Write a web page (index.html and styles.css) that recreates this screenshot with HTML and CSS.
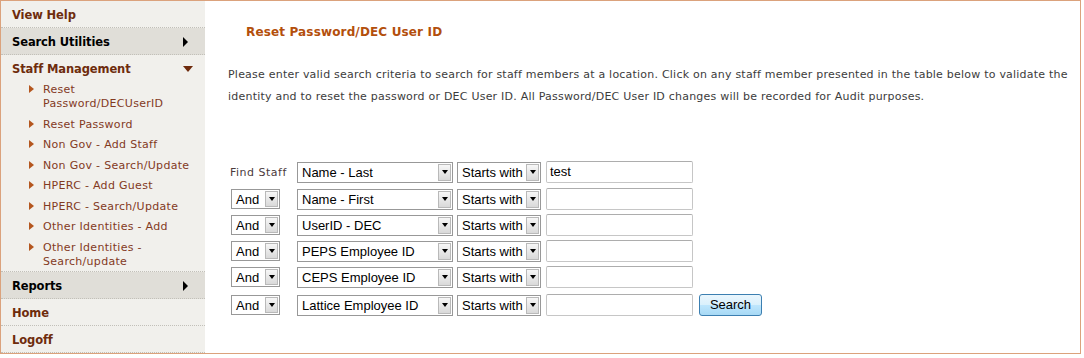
FILE: index.html
```html
<!DOCTYPE html>
<html>
<head>
<meta charset="utf-8">
<link rel="stylesheet" href="styles.css">
</head>
<body>
<div class="frame">
  <nav class="sidebar">
    <div class="hd brown sep">View Help</div>
    <div class="hd dark sep">Search Utilities<span class="ar"><svg width="5" height="10" viewBox="0 0 5 10"><polygon points="0,0 5,5 0,10" fill="#000"/></svg></span></div>
    <div class="hd brown staff">Staff Management<span class="ar"><svg width="10" height="6" viewBox="0 0 10 6"><polygon points="0,0 10,0 5,6" fill="#6e2a0c"/></svg></span></div>
    <ul class="sub sep">
      <li><svg class="bul" width="5" height="8" viewBox="0 0 5 8"><polygon points="0,0 5,4 0,8" fill="#b4561e"/></svg><span>Reset<br>Password/DECUserID</span></li>
      <li><svg class="bul" width="5" height="8" viewBox="0 0 5 8"><polygon points="0,0 5,4 0,8" fill="#b4561e"/></svg><span>Reset Password</span></li>
      <li><svg class="bul" width="5" height="8" viewBox="0 0 5 8"><polygon points="0,0 5,4 0,8" fill="#b4561e"/></svg><span>Non Gov - Add Staff</span></li>
      <li><svg class="bul" width="5" height="8" viewBox="0 0 5 8"><polygon points="0,0 5,4 0,8" fill="#b4561e"/></svg><span>Non Gov - Search/Update</span></li>
      <li><svg class="bul" width="5" height="8" viewBox="0 0 5 8"><polygon points="0,0 5,4 0,8" fill="#b4561e"/></svg><span>HPERC - Add Guest</span></li>
      <li><svg class="bul" width="5" height="8" viewBox="0 0 5 8"><polygon points="0,0 5,4 0,8" fill="#b4561e"/></svg><span>HPERC - Search/Update</span></li>
      <li><svg class="bul" width="5" height="8" viewBox="0 0 5 8"><polygon points="0,0 5,4 0,8" fill="#b4561e"/></svg><span>Other Identities - Add</span></li>
      <li><svg class="bul" width="5" height="8" viewBox="0 0 5 8"><polygon points="0,0 5,4 0,8" fill="#b4561e"/></svg><span>Other Identities -<br>Search/update</span></li>
    </ul>
    <div class="hd dark sep">Reports<span class="ar"><svg width="5" height="10" viewBox="0 0 5 10"><polygon points="0,0 5,5 0,10" fill="#000"/></svg></span></div>
    <div class="hd brown sep">Home</div>
    <div class="hd brown sep">Logoff</div>
  </nav>
  <main class="main">
    <h1 class="title">Reset Password/DEC User ID</h1>
    <p class="intro">Please enter valid search criteria to search for staff members at a location. Click on any staff member presented in the table below to validate the identity and to reset the password or DEC User ID. All Password/DEC User ID changes will be recorded for Audit purposes.</p>
    <div class="form">
      <div class="row first">
        <span class="lbl">Find Staff</span>
        <span class="sel field"><span class="val">Name - Last</span><span class="btn"><i></i></span></span>
        <span class="sel op"><span class="val">Starts with</span><span class="btn"><i></i></span></span>
        <span class="inp">test</span>
        <span></span>
      </div>
      <div class="row">
        <span class="sel and"><span class="val">And</span><span class="btn"><i></i></span></span>
        <span class="sel field"><span class="val">Name - First</span><span class="btn"><i></i></span></span>
        <span class="sel op"><span class="val">Starts with</span><span class="btn"><i></i></span></span>
        <span class="inp"></span>
        <span></span>
      </div>
      <div class="row">
        <span class="sel and"><span class="val">And</span><span class="btn"><i></i></span></span>
        <span class="sel field"><span class="val">UserID - DEC</span><span class="btn"><i></i></span></span>
        <span class="sel op"><span class="val">Starts with</span><span class="btn"><i></i></span></span>
        <span class="inp"></span>
        <span></span>
      </div>
      <div class="row">
        <span class="sel and"><span class="val">And</span><span class="btn"><i></i></span></span>
        <span class="sel field"><span class="val">PEPS Employee ID</span><span class="btn"><i></i></span></span>
        <span class="sel op"><span class="val">Starts with</span><span class="btn"><i></i></span></span>
        <span class="inp"></span>
        <span></span>
      </div>
      <div class="row">
        <span class="sel and"><span class="val">And</span><span class="btn"><i></i></span></span>
        <span class="sel field"><span class="val">CEPS Employee ID</span><span class="btn"><i></i></span></span>
        <span class="sel op"><span class="val">Starts with</span><span class="btn"><i></i></span></span>
        <span class="inp"></span>
        <span></span>
      </div>
      <div class="row last">
        <span class="sel and"><span class="val">And</span><span class="btn"><i></i></span></span>
        <span class="sel field"><span class="val">Lattice Employee ID</span><span class="btn"><i></i></span></span>
        <span class="sel op"><span class="val">Starts with</span><span class="btn"><i></i></span></span>
        <span class="inp"></span>
        <span class="search">Search</span>
      </div>
    </div>
  </main>
</div>
</body>
</html>
```
FILE: styles.css
```css
html, body { margin: 0; padding: 0; background: #fff; }
body { font-family: "DejaVu Sans", Verdana, sans-serif; font-size: 11px; }

.frame {
  display: flex;
  width: 1081px;
  height: 354px;
  border: 1px solid #dba27c;
  box-sizing: border-box;
}

.sidebar {
  width: 204px;
  flex: none;
  background: #f1f0ec;
}

.hd {
  height: 24px;
  padding: 2px 11px 0 11px;
  font-weight: bold;
  font-size: 11.5px;
  letter-spacing: -0.1px;
  display: flex;
  justify-content: space-between;
  align-items: center;
  box-sizing: content-box;
}
.hd.brown { color: #6e2c0c; }
.hd.dark { color: #000; background: #e0ded8; }
.hd.staff { height: 21px; padding-top: 3px; }
.sep { border-bottom: 1px dotted #c2c0b9; }

.ar { width: 11px; display: flex; align-items: center; }
.ar svg { display: block; }

.sub { list-style: none; margin: 0; padding: 1px 0 0 0; }
.sub li {
  display: flex;
  align-items: flex-start;
  padding: 3px 0 3.5px 28px;
  line-height: 14px;
  letter-spacing: 0.3px;
  color: #833a1e;
}
.sub li:last-child { padding-bottom: 2.5px; }
.sub .bul { flex: none; margin: 2px 9px 0 0; display: block; }

.main {
  flex: 1;
  background: #fff;
  padding: 23px 0 0 23px;
}

.title {
  margin: 0 0 24px 18px;
  font-size: 12px;
  line-height: 16px;
  font-weight: bold;
  letter-spacing: 0.15px;
  color: #b34f0c;
}

.intro {
  margin: 0;
  width: 848px;
  line-height: 22px;
  letter-spacing: 0.22px;
  color: #3c3c3c;
}

.form {
  margin: 53px 0 0 3px;
  display: grid;
  row-gap: 4px;
  font-family: "Liberation Sans", Arial, sans-serif;
  font-size: 13px;
}
.row {
  display: grid;
  grid-template-columns: 66px 160px 89px 153px auto;
  align-items: center;
  height: 22px;
}
.row.first { margin-bottom: 1px; }
.row.last { height: 24px; margin-top: 1px; }

.lbl {
  font-family: "DejaVu Sans", Verdana, sans-serif;
  font-size: 11px;
  letter-spacing: 0.5px;
  color: #4b3a3c;
  margin-left: -1px;
}

.sel {
  display: flex;
  align-items: center;
  justify-content: space-between;
  height: 21px;
  border: 1px solid #989898;
  box-sizing: border-box;
  background: #fff;
  padding: 1px;
  color: #000;
}
.sel .val { padding-left: 3px; line-height: 17px; white-space: nowrap; }
.sel.and { width: 49px; height: 20px; }
.sel.field { width: 156px; }
.sel.op { width: 84px; }
.sel .btn {
  flex: none;
  width: 11px;
  height: 15px;
  border: 1px solid #b9b9b9;
  background: linear-gradient(#f7f7f7, #d9d9d9);
  display: flex;
  align-items: center;
  justify-content: center;
}
.sel.and .btn { height: 14px; }
.sel .btn i {
  display: block;
  width: 0;
  height: 0;
  border-left: 3.5px solid transparent;
  border-right: 3.5px solid transparent;
  border-top: 4px solid #000;
}

.inp {
  display: block;
  width: 147px;
  height: 22px;
  box-sizing: border-box;
  border: 1px solid #c6c6c6;
  border-top-color: #adadad;
  border-radius: 2px;
  padding-left: 3px;
  line-height: 20px;
  color: #000;
}

.search {
  display: block;
  width: 63px;
  height: 22px;
  box-sizing: border-box;
  border: 1px solid #3c7fb1;
  border-radius: 3px;
  background: linear-gradient(#eaf6fd 0%, #d9f0fc 50%, #bee6fd 50%, #a7d9f5 100%);
  text-align: center;
  line-height: 20px;
  color: #000;
}
```
